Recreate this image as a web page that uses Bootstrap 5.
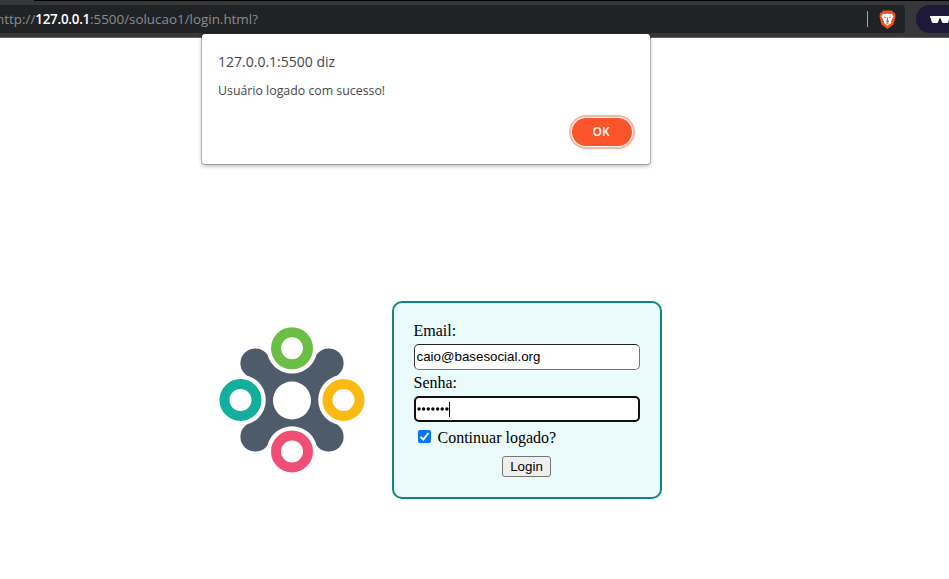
<!DOCTYPE html>
<html lang="pt-BR">
<head>
<meta charset="utf-8">
<meta name="viewport" content="width=device-width, initial-scale=1">
<title>Login</title>
<link href="https://cdn.jsdelivr.net/npm/bootstrap@5.3.0/dist/css/bootstrap.min.css" rel="stylesheet">
<style>
body{width:949px;height:579px;font-family:"Liberation Serif",serif;color:#000;line-height:18px}
.browser-bar{height:38px;background:#363738;border-bottom:1px solid #606162;padding-top:5px}
.top-line{left:0;top:0;width:100%;height:1px;background:#000;margin-left:34px}
.address{width:905px;height:28px;background:#202225;border-radius:0 4px 4px 0;font-family:"Open Sans",sans-serif;font-size:13.4px;color:#8b8d8f}
.url{margin-left:-4px;white-space:pre}
.url b{color:#fff;font-weight:600;letter-spacing:-.25px}
.sep{width:1px;height:16px;background:#a5a6a8;margin-right:11px}
.brave{margin-right:9px}
.private{width:33px;height:28px;background:#1e1839;border-radius:14px 0 0 14px;padding-left:14px}
.alert-box{left:202px;top:34px;width:448px;height:130px;background:#fff;border-radius:3px;box-shadow:0 0 0 1px rgba(0,0,0,.22),0 2px 4px rgba(0,0,0,.3);padding:18px;padding-left:16px;font-family:"Open Sans",sans-serif;color:#45474b}
.alert-title{font-size:14px;line-height:20px}
.alert-text{font-size:12.35px;line-height:18px;margin-top:10px}
.btn-ok{width:60px;height:28px;background:#fb542b;color:#fff;font-size:12px;font-weight:600;line-height:28px;padding:0 2px 0 0;border:0;border-radius:14px;box-shadow:0 0 0 1px #fff,0 0 0 3px #fbb5a3;margin-top:18px}
.btn-ok:hover{background:#fb542b;color:#fff}
.stage{padding:263px 0 0 212px}
.logo-art{width:160px;height:198px;margin-right:20px}
.login-form{width:270px;height:198px;background:#ebfafa;border:2px solid #108480;border-radius:10px;padding:19px 20px 0;font-size:16px}
.field-label{margin-left:-.5px}
.field{width:226px;height:26px;border:1px solid #767676;border-top-color:#222;border-left-color:#333;border-radius:5px;background:#fff;padding:0 2px 2px 1.5px;font:13.33px "Liberation Sans",sans-serif;display:flex;align-items:center}
.field-active{border:2px solid #101010;padding:0 1px}
.caret{width:1px;height:15px;background:#000}
.check-row{height:18px;margin-top:7px}
.check-icon{margin-bottom:4px}
.check-label{margin-left:6.500px}
.btn-login{width:49px;height:21px;border:1px solid #767676;border-radius:3px;background:#efefef;font:13.33px/19px "Liberation Sans",sans-serif;padding:0;color:#000;margin:9px 1px 0 0}
</style>
</head>
<body class="position-relative overflow-hidden bg-white">
<header class="browser-bar d-flex justify-content-between position-relative">
  <div class="top-line position-absolute"></div>
  <div class="address d-flex align-items-center overflow-hidden">
    <div class="url flex-grow-1">http://<b>127.0.0.1</b>:5500/solucao1/login.html?</div>
    <div class="sep"></div>
    <svg class="brave" width="17" height="19" viewBox="0 0 17 19" aria-label="Brave">
      <path d="M4 .5h9l1.500 2 1.500.5.5 3.500-2 8L8.500 19 2.500 14.500.5 6.500 1 3l1.500-.5z" fill="#f1501e"/>
      <path d="M4 3.800l2.500.3 2-.5 2 .5 2.500-.3 1.500 2.700-2.500 5 .3 1.500-3.800 2.700-3.800-2.700.3-1.500-2.500-5z" fill="#fff"/>
      <path d="M4.500 6.500l2.500.5-.5 1.500zM12.500 6.500l-2.500.5.5 1.500zM8.100 7.500h.8l.3 3 1 1.200-1.700 1-1.700-1 1-1.200zM6.500 14l2-1 2 1-2 .5z" fill="#f1501e"/>
    </svg>
  </div>
  <div class="private d-flex align-items-center overflow-hidden">
    <svg class="flex-shrink-0" width="20" height="9" viewBox="0 0 20 9"><path d="M0 1h20v2h-.7l-.8 3.500q-.3 1.500-1.800 1.500h-3q-1.500 0-2-1.500L10.800 3.500H9.200L8.400 6.500Q8 8 6.500 8h-3Q2 8 1.600 6.500L.7 3H0z" fill="#fff"/></svg>
  </div>
</header>
<main class="stage d-flex">
  <svg class="logo-art" viewBox="212 301 160 198" role="img" aria-label="Logo">
    <path d="M255.300 363.300L292 348.500l36.700 14.800L343.500 400l-14.800 36.700L292 451.500l-36.700-14.800L240.500 400z" fill="#4e5b6b"/>
    <g fill="#4e5b6b"><circle cx="255.300" cy="363.300" r="14.900"/><circle cx="328.700" cy="363.300" r="14.900"/><circle cx="255.300" cy="436.700" r="14.900"/><circle cx="328.700" cy="436.700" r="14.900"/></g>
    <g fill="#fff"><circle cx="292" cy="348.300" r="25.300"/><circle cx="343.500" cy="400" r="25.300"/><circle cx="292" cy="451.500" r="25.300"/><circle cx="240.500" cy="400" r="25.300"/><circle cx="292" cy="400.500" r="19"/></g>
    <g fill="none" stroke-width="10"><circle cx="292" cy="348.300" r="16" stroke="#6bbe45"/><circle cx="343.500" cy="400" r="16" stroke="#fcb912"/><circle cx="292" cy="451.500" r="16" stroke="#ef4f74"/><circle cx="240.500" cy="400" r="16" stroke="#14ae9d"/></g>
  </svg>
  <form class="login-form">
    <label class="field-label d-block">Email:</label>
    <div class="field mt-1">caio@basesocial.org</div>
    <label class="field-label d-block mt-1">Senha:</label>
    <div class="field field-active mt-1"><svg width="32" height="6" viewBox="0.500 0 32 6" aria-label="Senha"><g fill="#000"><circle cx="2.500" cy="3" r="1.700"/><circle cx="7.100" cy="3" r="1.700"/><circle cx="11.800" cy="3" r="1.700"/><circle cx="16.400" cy="3" r="1.700"/><circle cx="21.100" cy="3" r="1.700"/><circle cx="25.700" cy="3" r="1.700"/><circle cx="30.400" cy="3" r="1.700"/></g></svg><span class="caret"></span></div>
    <div class="check-row d-flex align-items-center ms-1">
      <svg class="check-icon" width="13" height="13" viewBox="0 0 13 13"><rect width="13" height="13" rx="2" fill="#0075ff"/><path d="M2.500 6.700l2.800 2.800 5.200-6.500" fill="none" stroke="#fff" stroke-width="2"/></svg>
      <label class="check-label">Continuar logado?</label>
    </div>
    <div class="text-center"><button class="btn-login" type="button">Login</button></div>
  </form>
</main>
<section class="alert-box position-absolute" role="dialog">
  <div class="alert-title">127.0.0.1:5500 diz</div>
  <div class="alert-text">Usuário logado com sucesso!</div>
  <div class="d-flex justify-content-end"><button class="btn btn-ok" type="button">OK</button></div>
</section>
<script src="https://cdn.jsdelivr.net/npm/bootstrap@5.3.0/dist/js/bootstrap.bundle.min.js"></script>
</body>
</html>
